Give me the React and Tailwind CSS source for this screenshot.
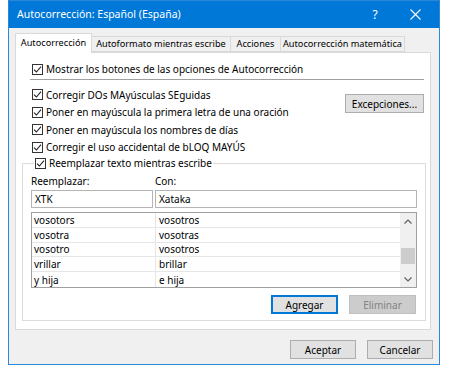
import React from "react";

const font = { fontFamily: '"Noto Sans", "Open Sans", sans-serif' };

function Check() {
  return (
    <span className="inline-flex items-center justify-center w-[11px] h-[11px] border border-[#333333] bg-white shrink-0">
      <svg width="9" height="9" viewBox="0 0 9 9" fill="none">
        <path d="M1 4.6 L3.4 7 L8 1.6" stroke="#222" strokeWidth="1.1" />
      </svg>
    </span>
  );
}

function CheckRow({ children, className = "" }) {
  return (
    <div className={"flex items-center gap-[3px] " + className}>
      <Check />
      <span className="whitespace-nowrap">{children}</span>
    </div>
  );
}

const rows = [
  ["vosotors", "vosotros"],
  ["vosotra", "vosotras"],
  ["vosotro", "vosotros"],
  ["vrillar", "brillar"],
  ["y hija", "e hija"],
];

export default function App() {
  return (
    <div className="w-[450px] h-[374px] bg-white text-[10px] text-black leading-none whitespace-nowrap" style={font}>
      <div className="ml-[8px] w-[432px] h-[365px] border border-[#2b88d8] bg-[#f0f0f0] flex flex-col">
        {/* Title bar */}
        <div className="h-[27px] bg-[#0078d7] flex items-center text-white text-[10.5px] pl-[8px] shrink-0">
          <span className="flex-1">Autocorrección: Español (España)</span>
          <span className="w-[20px] text-center text-[12px] mr-[25px]">?</span>
          <svg width="11" height="11" viewBox="0 0 11 11" className="mr-[18px]">
            <path d="M0.5 0.5 L10.5 10.5 M10.5 0.5 L0.5 10.5" stroke="white" strokeWidth="1.1" />
          </svg>
        </div>

        {/* Tabs */}
        <div className="pl-[6px] pr-[7px] pt-[5px]">
          <div className="flex items-end h-[19px] relative z-10 text-[9.2px]">
            <div className="h-[20px] w-[77px] bg-white border border-b-0 border-[#d9d9d9] flex items-center justify-center translate-y-[1px] pb-[1px]">
              Autocorrección
            </div>
            <div className="h-[16px] w-[139px] bg-[#f0f0f0] border border-l-0 border-[#d9d9d9] flex items-center justify-center">
              Autoformato mientras escribe
            </div>
            <div className="h-[16px] w-[50px] bg-[#f0f0f0] border border-l-0 border-[#d9d9d9] flex items-center justify-center">
              Acciones
            </div>
            <div className="h-[16px] w-[124px] bg-[#f0f0f0] border border-l-0 border-[#d9d9d9] flex items-center justify-center">
              Autocorrección matemática
            </div>
          </div>

          {/* Panel */}
          <div className="h-[278px] w-[416px] bg-white border border-[#d9d9d9] pt-[7px] flex flex-col">
            <CheckRow className="h-[18px] pl-[16px]">Mostrar los botones de las opciones de Autocorrección</CheckRow>
            <div className="ml-[14px] mt-[1px] w-[394px] h-px bg-[#a0a0a0]" />
            <div className="flex mt-[6px]">
              <div className="flex flex-col pl-[16px] flex-1">
                <CheckRow className="h-[17.5px]">Corregir DOs MAyúsculas SEguidas</CheckRow>
                <CheckRow className="h-[17.5px]">Poner en mayúscula la primera letra de una oración</CheckRow>
                <CheckRow className="h-[17.5px]">Poner en mayúscula los nombres de días</CheckRow>
                <CheckRow className="h-[17.5px]">Corregir el uso accidental de bLOQ MAYÚS</CheckRow>
              </div>
              <div className="mr-[6px] mt-[8px] w-[79px] h-[19px] bg-[#e1e1e1] border border-[#adadad] flex items-center justify-center">
                Excepciones...
              </div>
            </div>

            <fieldset className="ml-[6px] mt-[-1px] w-[403px] h-[166px] border border-[#dcdcdc] px-[8px]">
              <legend className="ml-[3px] px-[1px] bg-white">
                <CheckRow className="h-[16px]">Reemplazar texto mientras escribe</CheckRow>
              </legend>
              <div className="flex h-[16px] items-center mt-[2px]">
                <span className="w-[124px]">Reemplazar:</span>
                <span>Con:</span>
              </div>
              <div className="flex gap-[2px] mt-[1px]">
                <div className="w-[122px] h-[18px] border border-[#b4b4b4] flex items-center pl-[3px]">XTK</div>
                <div className="w-[262px] h-[18px] border border-[#b4b4b4] flex items-center pl-[3px]">Xataka</div>
              </div>
              <div className="mt-[4px] w-[386px] h-[76px] border border-[#a0a0a0] flex">
                <div className="flex-1 flex flex-col">
                  {rows.map(([a, b], i) => (
                    <div key={i} className={"flex h-[14.8px] items-center " + (i < 4 ? "border-b border-[#e6e6e6]" : "")}>
                      <span className="w-[124px] h-full flex items-center pl-[2px] border-r border-[#e6e6e6]">{a}</span>
                      <span className="pl-[3px]">{b}</span>
                    </div>
                  ))}
                </div>
                <div className="w-[16px] bg-[#f0f0f0] flex flex-col items-center">
                  <div className="h-[17px] flex items-center justify-center">
                    <svg width="8" height="5" viewBox="0 0 8 5"><path d="M0.5 4.5 L4 1 L7.5 4.5" stroke="#606060" strokeWidth="1.2" fill="none" /></svg>
                  </div>
                  <div className="flex-1 w-full flex flex-col justify-end pb-[1px]">
                    <div className="w-[14px] mx-auto h-[16px] bg-[#cdcdcd] mb-[6px]" />
                  </div>
                  <div className="h-[16px] flex items-center justify-center">
                    <svg width="8" height="5" viewBox="0 0 8 5"><path d="M0.5 0.5 L4 4 L7.5 0.5" stroke="#606060" strokeWidth="1.2" fill="none" /></svg>
                  </div>
                </div>
              </div>
              <div className="flex justify-end gap-[11px] mt-[7px] pr-[1px]">
                <div className="w-[67px] h-[19px] bg-[#e1e1e1] border-2 border-[#0078d7] flex items-center justify-center">Agregar</div>
                <div className="w-[67px] h-[19px] bg-[#cccccc] border border-[#bfbfbf] text-[#838383] flex items-center justify-center">Eliminar</div>
              </div>
            </fieldset>
          </div>
        </div>

        {/* Footer */}
        <div className="flex justify-end gap-[11px] pr-[6px] mt-[10px]">
          <div className="w-[66px] h-[19px] bg-[#e1e1e1] border border-[#adadad] flex items-center justify-center">Aceptar</div>
          <div className="w-[66px] h-[19px] bg-[#e1e1e1] border border-[#adadad] flex items-center justify-center">Cancelar</div>
        </div>
      </div>
    </div>
  );
}
